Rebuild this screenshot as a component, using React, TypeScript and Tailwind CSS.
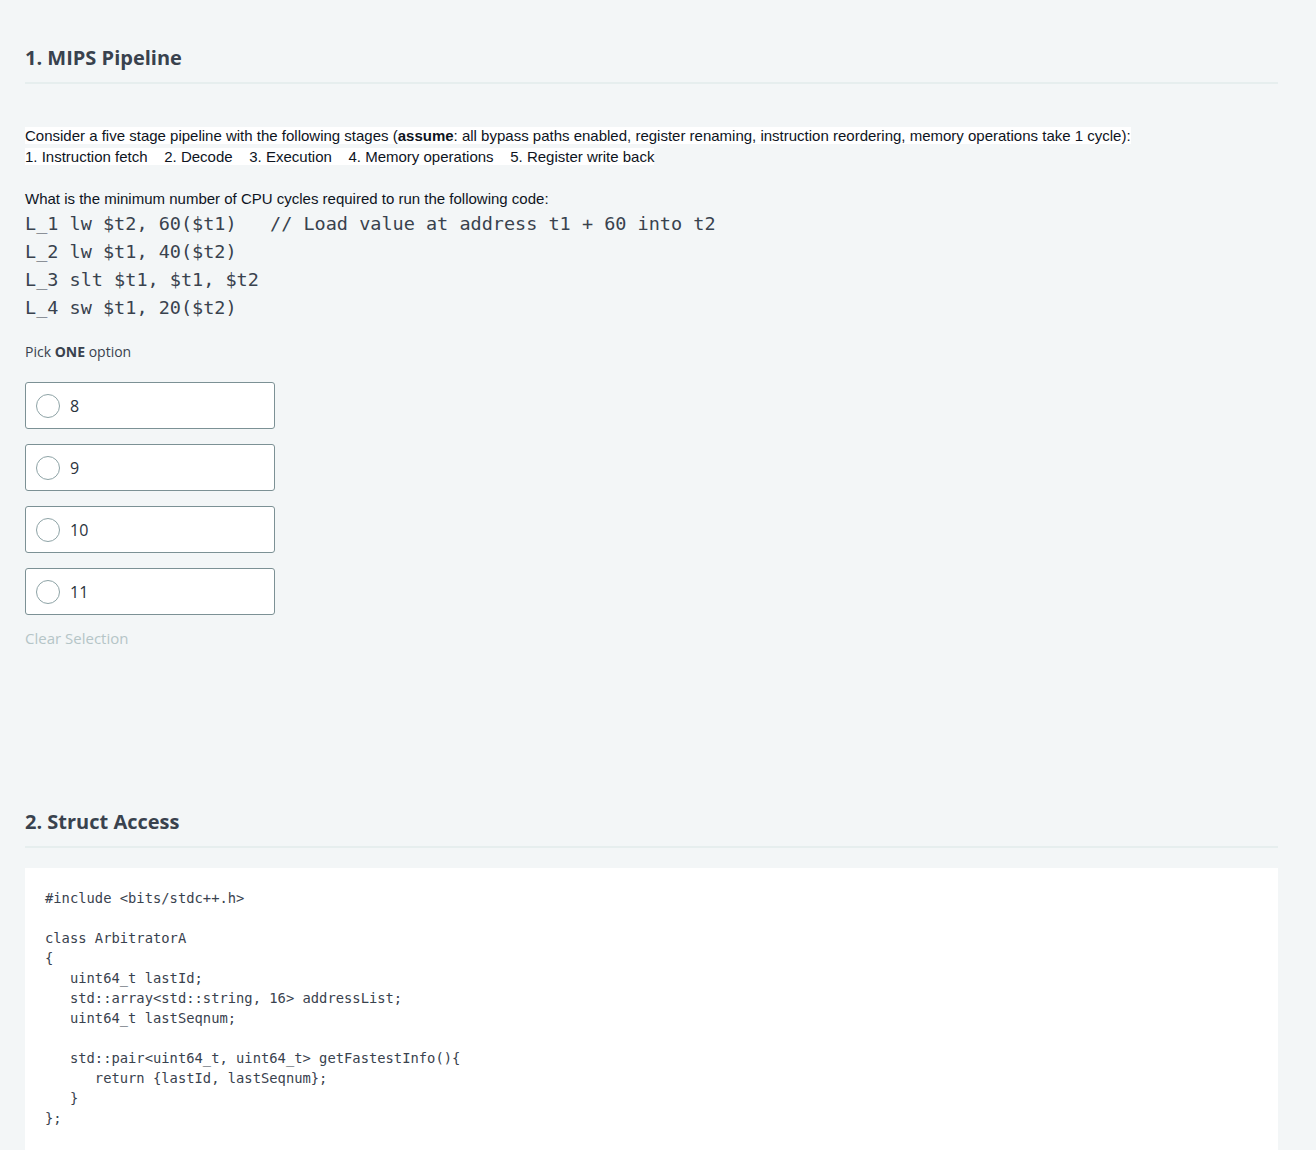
import React from 'react';

const sans = { fontFamily: '"Open Sans", "Noto Sans", sans-serif' };

const options = ['8', '9', '10', '11'];

const asm = [
  'L_1 lw $t2, 60($t1)   // Load value at address t1 + 60 into t2',
  'L_2 lw $t1, 40($t2)',
  'L_3 slt $t1, $t1, $t2',
  'L_4 sw $t1, 20($t2)',
];

const cpp = `#include <bits/stdc++.h>

class ArbitratorA
{
   uint64_t lastId;
   std::array<std::string, 16> addressList;
   uint64_t lastSeqnum;

   std::pair<uint64_t, uint64_t> getFastestInfo(){
      return {lastId, lastSeqnum};
   }
};`;

function Heading({ children }: { children: React.ReactNode }) {
  return (
    <div className="border-b-2 border-[#e6eeee] pb-[10px]">
      <h2 className="text-[20px] leading-[28px] font-bold text-[#39424e] [font-family:'Open_Sans',sans-serif]">
        {children}
      </h2>
    </div>
  );
}

function Option({ label }: { label: string }) {
  return (
    <label className="flex h-[47px] w-[250px] items-center rounded-[3px] border border-[#7c9195] bg-white pl-[10px]">
      <span className="h-[24px] w-[24px] rounded-full border border-[#8ea3a6] bg-white" />
      <span className="ml-[10px] text-[16px] text-[#2b333d]">{label}</span>
    </label>
  );
}

export default function App() {
  return (
    <div className="min-h-[1150px] bg-[#f3f6f7] px-[25px] pt-[44px]" style={sans}>
      <div className="w-[1253px]">
        <Heading>1. MIPS Pipeline</Heading>

        <div className="mt-[41px] text-[15px] leading-[21px] text-[#0e141e] [font-family:'Liberation_Sans',Arial,sans-serif]">
          <div>
            <span className="bg-white">
              Consider a five stage pipeline with the following stages (<b>assume</b>: all bypass paths enabled, register renaming, instruction reordering, memory operations take 1 cycle):
            </span>
          </div>
          <div className="whitespace-pre">
            <span className="bg-white">{'1. Instruction fetch    2. Decode    3. Execution    4. Memory operations    5. Register write back'}</span>
          </div>
          <div className="h-[21px]" />
          <div>What is the minimum number of CPU cycles required to run the following code:</div>
        </div>

        <div className="mt-px whitespace-pre text-[18.5px] leading-[28px] text-[#39424e] [font-family:'DejaVu_Sans_Mono',monospace]">
          {asm.map((l) => (
            <div key={l}>{l}</div>
          ))}
        </div>

        <p className="mt-[20px] text-[14px] leading-[20px] text-[#39424e]">
          Pick <b>ONE</b> option
        </p>

        <div className="mt-[20px] flex flex-col gap-[15px]">
          {options.map((o) => (
            <Option key={o} label={o} />
          ))}
        </div>

        <div className="mt-[13px] text-[15px] leading-[20px] text-[#b5c5c7]">Clear Selection</div>

        <div className="mt-[160px]">
          <Heading>2. Struct Access</Heading>
        </div>

        <div className="mt-[20px] bg-white px-[20px] pb-[30px] pt-[20px]">
          <pre className="text-[13.8px] leading-[20px] text-[#39424e] [font-family:'DejaVu_Sans_Mono',monospace]">
            {cpp}
          </pre>
        </div>
      </div>
    </div>
  );
}
